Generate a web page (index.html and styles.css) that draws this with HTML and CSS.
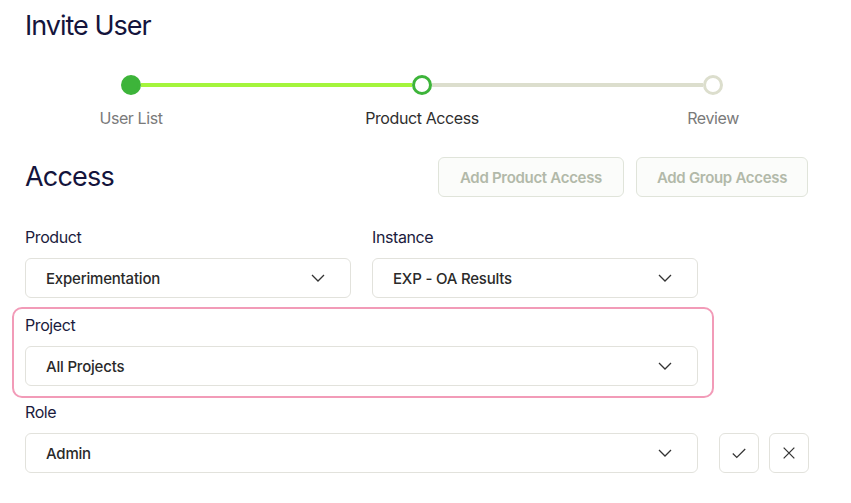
FILE: index.html
```html
<!DOCTYPE html>
<html lang="en">
<head>
    <meta charset="UTF-8">
    <meta name="viewport" content="width=device-width, initial-scale=1.0">
    <title>Invite User</title>
    <link rel="stylesheet" href="styles.css">
</head>
<body>
    <div class="page">
        <h1 class="title">Invite User</h1>

        <div class="stepper">
            <div class="step done">
                <span class="dot"></span>
                <span class="step-label">User List</span>
            </div>
            <span class="line line-done"></span>
            <div class="step current">
                <span class="dot"></span>
                <span class="step-label">Product Access</span>
            </div>
            <span class="line"></span>
            <div class="step">
                <span class="dot"></span>
                <span class="step-label">Review</span>
            </div>
        </div>

        <div class="access-head">
            <h2 class="section-title">Access</h2>
            <div class="head-actions">
                <button class="btn-ghost btn-product" disabled>Add Product Access</button>
                <button class="btn-ghost btn-group" disabled>Add Group Access</button>
            </div>
        </div>

        <div class="field-row">
            <div class="field">
                <label class="field-label">Product</label>
                <div class="select">
                    <span>Experimentation</span>
                    <svg class="chevron" viewBox="0 0 14 8"><path d="M1 1l6 6 6-6"/></svg>
                </div>
            </div>
            <div class="field">
                <label class="field-label">Instance</label>
                <div class="select">
                    <span>EXP - OA Results</span>
                    <svg class="chevron" viewBox="0 0 14 8"><path d="M1 1l6 6 6-6"/></svg>
                </div>
            </div>
        </div>

        <div class="field highlight">
            <label class="field-label">Project</label>
            <div class="select">
                <span>All Projects</span>
                <svg class="chevron" viewBox="0 0 14 8"><path d="M1 1l6 6 6-6"/></svg>
            </div>
        </div>

        <div class="field role">
            <label class="field-label">Role</label>
            <div class="role-row">
                <div class="select wide">
                    <span>Admin</span>
                    <svg class="chevron" viewBox="0 0 14 8"><path d="M1 1l6 6 6-6"/></svg>
                </div>
                <button class="icon-btn confirm">
                    <svg viewBox="0 0 18 18"><path d="M2 9.5l4.5 4.5L16 4.5"/></svg>
                </button>
                <button class="icon-btn">
                    <svg viewBox="0 0 18 18"><path d="M3 3l12 12M15 3L3 15"/></svg>
                </button>
            </div>
        </div>
    </div>
</body>
</html>
```

FILE: styles.css
```css
body {
    margin: 0;
    background: #ffffff;
    font-family: 'Inter', 'Liberation Sans', sans-serif;
    color: #14143c;
}
.page {
    width: 783px;
    padding: 8px 0 0 25px;
}
.title {
    margin: 0;
    font-size: 27px;
    line-height: 36px;
    font-weight: 400;
    letter-spacing: -1px;
    color: #14143c;
}

/* stepper */
.stepper {
    display: flex;
    align-items: flex-start;
    margin-top: 31px;
    padding-left: 96px;
}
.step {
    width: 20px;
    display: flex;
    flex-direction: column;
    align-items: center;
}
.dot {
    width: 20px;
    height: 20px;
    box-sizing: border-box;
    border-radius: 50%;
    border: 3px solid #dcdecd;
    background: #fff;
}
.step.done .dot {
    background: #3db43a;
    border-color: #3db43a;
}
.step.current .dot {
    border-color: #3db43a;
}
.line {
    width: 271px;
    height: 4px;
    margin-top: 8px;
    background: #dcdecd;
}
.line-done {
    background: #a4f53c;
}
.step-label {
    margin-top: 13px;
    font-size: 16px;
    line-height: 20px;
    white-space: nowrap;
    color: #7a7a7a;
    letter-spacing: -0.4px;
}
.step.current .step-label {
    color: #2e2e2e;
}

/* access header */
.access-head {
    display: flex;
    align-items: center;
    justify-content: space-between;
    margin-top: 29px;
}
.section-title {
    margin: 0;
    font-size: 27px;
    line-height: 36px;
    font-weight: 400;
    letter-spacing: -0.8px;
}
.head-actions {
    display: flex;
    gap: 12px;
}
.btn-ghost {
    height: 40px;
    padding: 0;
    font-family: inherit;
    font-size: 15px;
    font-weight: 600;
    letter-spacing: -0.3px;
    color: #b2b9a9;
    background: #fbfcfa;
    border: 1px solid #e0e4da;
    border-radius: 6px;
}
.btn-product {
    width: 186px;
}
.btn-group {
    width: 172px;
}

/* fields */
.field-row {
    display: flex;
    gap: 21px;
    margin-top: 30px;
}
.field {
    display: flex;
    flex-direction: column;
}
.field-label {
    font-size: 16px;
    line-height: 20px;
    margin-bottom: 11px;
    letter-spacing: -0.4px;
    color: #1b1b3d;
}
.select {
    width: 326px;
    height: 40px;
    flex-shrink: 0;
    box-sizing: border-box;
    padding: 0 25px 0 20px;
    display: flex;
    align-items: center;
    justify-content: space-between;
    border: 1px solid #e2e2dc;
    border-radius: 6px;
    background: #fff;
    font-size: 15px;
    font-weight: 500;
    letter-spacing: -0.2px;
    color: #2a2a2a;
}
.chevron {
    width: 14px;
    height: 8px;
    fill: none;
    stroke: #333;
    stroke-width: 1.3;
}
.highlight {
    width: 702px;
    box-sizing: border-box;
    margin: 9px 0 0 -13px;
    padding: 6px 14px 10px 11px;
    border: 2px solid #f29bb8;
    border-radius: 10px;
}
.highlight .select,
.select.wide {
    width: 673px;
}
.role {
    margin-top: 4px;
}
.role-row {
    display: flex;
    align-items: center;
}
.icon-btn {
    width: 40px;
    height: 40px;
    flex-shrink: 0;
    margin-left: 10px;
    padding: 0;
    display: flex;
    align-items: center;
    justify-content: center;
    background: #fff;
    border: 1px solid #e2e2dc;
    border-radius: 6px;
}
.icon-btn.confirm {
    margin-left: 21px;
}
.icon-btn svg {
    width: 16px;
    height: 16px;
    fill: none;
    stroke: #333;
    stroke-width: 1.4;
}
```
